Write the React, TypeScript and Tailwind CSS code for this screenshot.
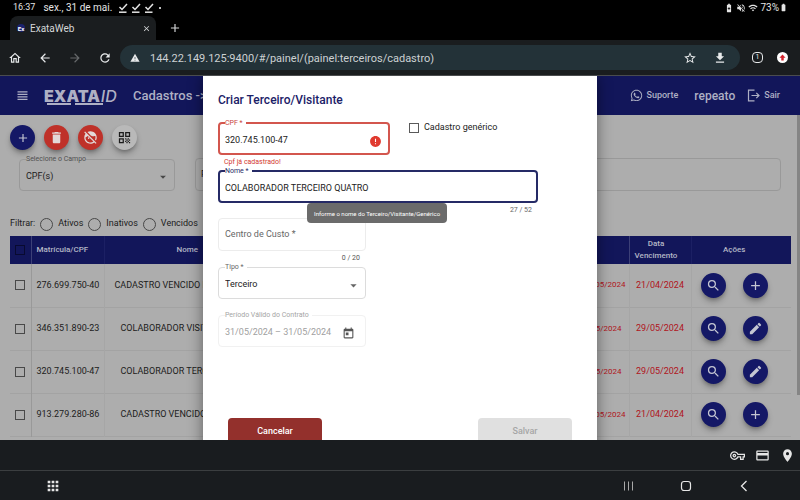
import React from "react";
import {
  MdOutlineHome,
  MdArrowBack,
  MdArrowForward,
  MdRefresh,
  MdWarning,
  MdStarBorder,
  MdDownload,
  MdViewHeadline,
  MdDelete,
  MdFaceRetouchingOff,
  MdQrCode,
  MdSearch,
  MdAdd,
  MdEdit,
  MdOutlineVpnKey,
  MdCreditCard,
  MdLocationOn,
  MdApps,
  MdArrowDropDown,
  MdError,
  MdToday,
  MdClose,
  MdVolumeOff,
  MdWifi,
  MdBatterySaver,
  MdBatteryFull,
} from "react-icons/md";
import { FaWhatsapp } from "react-icons/fa";

function DoneMark() {
  return (
    <svg viewBox="0 0 10 10" className="size-[10px]" fill="none" stroke="currentColor" strokeWidth="1.5">
      <path d="M1.5 4 L4 6.5 L9 1" />
      <path d="M1 9.2 H8.5" />
    </svg>
  );
}

function StatusBar() {
  return (
    <div className="flex h-[15px] shrink-0 items-center bg-black pl-[13px] pr-3 text-[#e4e4e4]">
      <span className="text-[9px]">16:37</span>
      <span className="ml-2 text-[10px]">sex., 31 de mai.</span>
      <span className="ml-[6px] flex items-center gap-[3px]">
        <DoneMark />
        <DoneMark />
        <DoneMark />
        <span className="ml-0.5 size-0.5 rounded-full bg-white" />
      </span>
      <span className="ml-auto flex items-center gap-0.5">
        <MdBatterySaver className="size-[10px]" />
        <MdVolumeOff className="size-[10px]" />
        <MdWifi className="size-[10px]" />
        <span className="text-[10px]">73%</span>
        <MdBatteryFull className="-ml-0.5 size-[9px]" />
      </span>
    </div>
  );
}

function TabStrip() {
  return (
    <div className="flex h-[25px] shrink-0 items-end bg-black pl-[10px]">
      <div className="flex h-6 w-[146px] items-center rounded-t-lg bg-[#1a1d1f] pl-[7px] pr-[5px] text-[#d5d7d8]">
        <span className="flex size-2 items-center justify-center rounded-full bg-[#1b236e] text-[6px] font-bold text-white">
          Ex
        </span>
        <span className="ml-[5px] text-[10px]">ExataWeb</span>
        <button aria-label="Fechar guia" className="ml-auto">
          <MdClose className="size-[9px]" />
        </button>
      </div>
      <button aria-label="Nova guia" className="ml-3 flex h-6 items-center text-[#d5d7d8]">
        <MdAdd className="size-[14px]" />
      </button>
    </div>
  );
}

function AddressBar() {
  return (
    <div className="flex h-9 shrink-0 items-center border-b border-[#4a4c4e] bg-[#1a1d1f] pl-2 pr-3 text-[#e8eaeb]">
      <div className="flex items-center gap-4">
        <button aria-label="Início"><MdOutlineHome className="size-[14px]" /></button>
        <button aria-label="Voltar"><MdArrowBack className="size-[14px]" /></button>
        <button aria-label="Avançar" className="text-[#66696b]"><MdArrowForward className="size-[14px]" /></button>
        <button aria-label="Recarregar"><MdRefresh className="size-[14px]" /></button>
      </div>
      <div className="ml-2 flex h-[25px] flex-1 items-center rounded-full bg-[#233238] pl-[10px] pr-[13px]">
        <MdWarning className="size-[10px] shrink-0" />
        <input
          aria-label="Endereço"
          readOnly
          value="144.22.149.125:9400/#/painel/(painel:terceiros/cadastro)"
          className="ml-[10px] h-5 min-w-0 flex-1 bg-transparent pt-0.5 text-[11px] text-[#ccd1d3] outline-none"
        />
        <button aria-label="Favorito"><MdStarBorder className="size-[14px]" /></button>
        <button aria-label="Baixar" className="ml-4"><MdDownload className="size-[14px]" /></button>
      </div>
      <button
        aria-label="Guias abertas"
        className="ml-3 flex size-[11px] items-center justify-center rounded-sm border border-[#e8eaeb] text-[7px] leading-none"
      >
        1
      </button>
      <button
        aria-label="Atualizar navegador"
        className="ml-[14px] flex size-[11px] items-center justify-center rounded-full bg-white text-[#d3222c]"
      >
        <svg viewBox="0 0 8 8" className="size-[7px]" fill="currentColor">
          <path d="M4 0.5 L7.5 4.2 H5.4 V7.5 H2.6 V4.2 H0.5 Z" />
        </svg>
      </button>
    </div>
  );
}

function Logo() {
  return (
    <span className="relative flex w-20 items-center leading-none text-[#aeb0c4]">
      <span className="font-[Inter,sans-serif] text-[16px] font-black">EXATA</span>
      <span className="ml-px font-[Inter,sans-serif] text-[16px] font-medium italic">ID</span>
      <svg viewBox="0 0 60 2" className="absolute left-0.5 top-[15px] h-0.5 w-[60px]" fill="none" stroke="currentColor" strokeWidth="2">
        <path d="M1 1 H25 M29 1 H57" />
      </svg>
    </span>
  );
}

function ExitIcon() {
  return (
    <svg viewBox="0 0 13 13" className="size-[13px]" fill="none" stroke="currentColor" strokeWidth="1.2">
      <path d="M7.5 1.2 H1.5 V11.8 H7.5 M4.5 6.5 H12 M9.3 3.8 L12 6.5 L9.3 9.2" />
    </svg>
  );
}

function AppHeader() {
  return (
    <header className="flex h-[39px] shrink-0 items-center bg-[#12165a] pl-[15px] pr-5 text-[#aeb0c4]">
      <button aria-label="Menu"><MdViewHeadline className="size-[15px]" /></button>
      <span className="ml-[14px]"><Logo /></span>
      <span className="ml-[9px] whitespace-nowrap text-[13px] font-medium">Cadastros -&gt;</span>
      <a href="#suporte" className="ml-auto flex items-center gap-1 text-[9px] font-medium">
        <FaWhatsapp className="size-[13px]" />
        Suporte
      </a>
      <span className="ml-4 text-[12px] font-medium">repeato</span>
      <a href="#sair" className="ml-3 flex items-center gap-1 text-[9px] font-medium">
        <ExitIcon />
        Sair
      </a>
    </header>
  );
}

function RoundButton({ label, tone, children }: { label: string; tone: string; children: React.ReactNode }) {
  return (
    <button
      aria-label={label}
      className={`flex size-[25px] items-center justify-center rounded-full shadow-md shadow-black/30 ${tone}`}
    >
      {children}
    </button>
  );
}

const NAVY = "bg-[#141866] text-[#c4c6d2]";
const RED = "bg-[#bf3129] text-[#e3d9d8]";

const rows = [
  { id: "276.699.750-40", name: "CADASTRO VENCIDO I", pad: "pl-[10px]", until: "21/05/2024", untilPad: "pr-[3px]", due: "21/04/2024", edit: false },
  { id: "346.351.890-23", name: "COLABORADOR VISITANTE", pad: "pl-4", until: "29/05/2024", untilPad: "pr-[7px]", due: "29/05/2024", edit: true },
  { id: "320.745.100-47", name: "COLABORADOR TERCEIRO", pad: "pl-4", until: "29/05/2024", untilPad: "pr-[7px]", due: "29/05/2024", edit: true },
  { id: "913.279.280-86", name: "CADASTRO VENCIDO", pad: "pl-4", until: "21/05/2024", untilPad: "pr-[3px]", due: "21/04/2024", edit: false },
];

const filters = ["Ativos", "Inativos", "Vencidos"];

function Page() {
  return (
    <main className="flex-1 pl-[10px] pr-[9px] pt-[10px] text-[9px] text-[#1c1c1c]">
      <div className="flex gap-[9px]">
        <RoundButton label="Adicionar" tone={NAVY}><MdAdd className="size-[14px]" /></RoundButton>
        <RoundButton label="Excluir" tone={RED}><MdDelete className="size-[15px]" /></RoundButton>
        <RoundButton label="Remover foto" tone={RED}><MdFaceRetouchingOff className="size-[15px]" /></RoundButton>
        <RoundButton label="Código QR" tone="bg-[#b9b9b9] text-[#1c1c1c]"><MdQrCode className="size-[15px]" /></RoundButton>
      </div>

      <div className="mt-[5px] flex gap-5 pl-[9px]">
        <fieldset className="h-9 w-[156px] min-w-0 shrink-0 rounded-sm border border-[#999999] px-[6px]">
          <legend className="h-2 text-[7px] leading-[8px] text-[#505050]">
            <label htmlFor="campo">Selecione o Campo</label>
          </legend>
          <div className="flex h-7 items-center">
            <select id="campo" className="flex-1 appearance-none bg-transparent outline-none">
              <option>CPF(s)</option>
            </select>
            <MdArrowDropDown className="-mr-0.5 size-[14px] text-[#484848]" />
          </div>
        </fieldset>
        <div className="mr-[10px] mt-[3px] flex h-[33px] flex-1 items-center rounded-sm border border-[#999999] px-[5px]">
          <input
            aria-label="Pesquisar"
            placeholder="Pesquisar"
            className="w-full bg-transparent outline-none placeholder:text-[#1c1c1c]"
          />
        </div>
      </div>

      <div className="mt-[25px] flex h-4 items-center gap-[5px]">
        <span>Filtrar:</span>
        {filters.map((f) => (
          <label key={f} className="flex items-center gap-[5px]">
            <input type="radio" name="filtro" className="size-[13px] appearance-none rounded-full border border-[#484848]" />
            {f}
          </label>
        ))}
      </div>

      <table className="mt-1 w-full table-fixed border-collapse">
        <colgroup>
          <col className="w-[21px]" />
          <col className="w-[73px]" />
          <col className="w-[166px]" />
          <col />
          <col className="w-[100px]" />
          <col className="w-[62px]" />
          <col className="w-[100px]" />
        </colgroup>
        <thead>
          <tr className="h-7 bg-[#12165a] text-[8px] leading-[12px] text-[#b4b6c6]">
            <th className="border-r border-[#3c4077] p-0">
              <input
                type="checkbox"
                aria-label="Selecionar todos"
                className="mx-auto block size-[10px] appearance-none border border-[#080a30]"
              />
            </th>
            <th className="border-r border-[#1c2064] p-0 pl-[5px] text-left font-medium">Matrícula/CPF</th>
            <th className="p-0 font-medium">Nome</th>
            <th className="p-0" />
            <th className="border-r border-[#3c4077] p-0" />
            <th className="border-r border-[#1c2064] p-0 pr-2 font-medium">
              Data
              <br />
              Vencimento
            </th>
            <th className="p-0 pr-[14px] font-medium">Ações</th>
          </tr>
        </thead>
        <tbody>
          {rows.map((r) => (
            <tr key={r.id} className="h-[43px] border-b border-[#a3a3a3]">
              <td className="border-r border-[#999999] p-0">
                <input
                  type="checkbox"
                  aria-label={`Selecionar ${r.id}`}
                  className="mx-auto block size-[10px] appearance-none border border-[#484848]"
                />
              </td>
              <td className="border-r border-[#a6a6a6] p-0 pl-[5px]">{r.id}</td>
              <td className={`overflow-hidden whitespace-nowrap py-0 pr-0 ${r.pad}`}>{r.name}</td>
              <td className="p-0" />
              <td className={`border-r border-[#a6a6a6] py-0 pl-0 text-right text-[8px] text-[#b0141c] ${r.untilPad}`}>{r.until}</td>
              <td className="border-r border-[#a6a6a6] p-0 text-center text-[#b0141c]">{r.due}</td>
              <td className="p-0">
                <div className="flex gap-[17px] pl-[9px]">
                  <RoundButton label={`Consultar ${r.id}`} tone={NAVY}><MdSearch className="size-[15px]" /></RoundButton>
                  <RoundButton label={`Editar ${r.id}`} tone={NAVY}>
                    {r.edit ? <MdEdit className="size-[15px]" /> : <MdAdd className="size-[15px]" />}
                  </RoundButton>
                </div>
              </td>
            </tr>
          ))}
        </tbody>
      </table>
    </main>
  );
}

function Field({
  id,
  label,
  frame,
  labelTone,
  hint,
  children,
}: {
  id: string;
  label: string;
  frame: string;
  labelTone: string;
  hint?: React.ReactNode;
  children: React.ReactNode;
}) {
  return (
    <div>
      <fieldset className={`h-9 min-w-0 rounded ${frame}`}>
        <legend className={`h-2 pr-[3px] text-[7px] leading-[8px] ${labelTone}`}>
          <label htmlFor={id}>{label}</label>
        </legend>
        <div className="flex h-7 items-center">{children}</div>
      </fieldset>
      <div className="h-3 px-[6px] text-[7px] leading-[14px]">{hint}</div>
    </div>
  );
}

function Dialog() {
  return (
    <div className="absolute inset-0 flex justify-center overflow-hidden">
      <section
        role="dialog"
        aria-labelledby="titulo"
        className="h-[420px] w-[394px] bg-white px-[15px] pt-4 text-[9px] text-[#222222] shadow-[0_0_14px_rgba(0,0,0,0.45)]"
      >
        <h1 id="titulo" className="h-[27px] text-[12px] font-medium leading-4 text-[#1b2167]">
          Criar Terceiro/Visitante
        </h1>
        <div className="flex items-start">
          <div className="w-[172px]">
            <Field
              id="cpf"
              label="CPF *"
              frame="border-2 border-[#d3564e] px-[5px]"
              labelTone="text-[#c9443c]"
              hint={<span className="text-[#d3392f]">Cpf já cadastrado!</span>}
            >
              <input id="cpf" defaultValue="320.745.100-47" className="min-w-0 flex-1 bg-transparent outline-none" />
              <MdError className="mr-px size-[13px] text-[#e03a2f]" />
            </Field>
          </div>
          <label className="ml-[19px] mt-0.5 flex items-center gap-[5px]">
            <input type="checkbox" className="size-[10px] appearance-none border border-[#5a5a5a]" />
            Cadastro genérico
          </label>
        </div>
        <div className="relative w-80">
          <Field
            id="nome"
            label="Nome *"
            frame="border-2 border-[#252a66] px-[5px]"
            labelTone="text-[#252a66]"
            hint={<span className="block text-right text-[#666666]">27 / 52</span>}
          >
            <input id="nome" defaultValue="COLABORADOR TERCEIRO QUATRO" className="min-w-0 flex-1 bg-transparent outline-none" />
          </Field>
          <div
            role="tooltip"
            className="absolute left-[89px] top-9 z-10 flex h-5 items-center whitespace-nowrap rounded-sm bg-[#6b6b6b] px-[7px] text-[6px] text-white"
          >
            Informe o nome do Terceiro/Visitante/Genérico
          </div>
        </div>
        <div className="w-[148px]">
          <div className="h-12 pt-[3px]">
            <div className="flex h-[33px] items-center rounded border border-[#ececec] px-[6px]">
              <input
                aria-label="Centro de Custo"
                placeholder="Centro de Custo *"
                className="w-full bg-transparent outline-none placeholder:text-[#666666]"
              />
            </div>
            <div className="px-[6px] text-right text-[7px] leading-[14px] text-[#555555]">0 / 20</div>
          </div>
          <Field id="tipo" label="Tipo *" frame="border border-[#dcdcdc] px-[6px]" labelTone="text-[#666666]">
            <select id="tipo" className="flex-1 appearance-none bg-transparent outline-none">
              <option>Terceiro</option>
            </select>
            <MdArrowDropDown className="-mr-0.5 size-[15px] text-[#666666]" />
          </Field>
          <Field id="periodo" label="Período Válido do Contrato" frame="border border-[#f1f1f1] px-[6px]" labelTone="text-[#a5a5a5]">
            <input
              id="periodo"
              readOnly
              value="31/05/2024 – 31/05/2024"
              className="min-w-0 flex-1 bg-transparent text-[#a0a0a0] outline-none"
            />
            <button aria-label="Abrir calendário" className="mr-1 text-[#555555]">
              <MdToday className="size-[13px]" />
            </button>
          </Field>
        </div>
        <div className="mt-[59px] flex justify-between px-[10px]">
          <button className="h-[27px] w-[94px] rounded-sm bg-[#93302c] font-medium text-white">Cancelar</button>
          <button disabled className="h-[27px] w-[94px] rounded-sm bg-[#e0e0e0] font-medium text-[#a6a6a6]">Salvar</button>
        </div>
      </section>
    </div>
  );
}

function SystemBars() {
  return (
    <footer className="shrink-0 bg-[#191c1f] text-[#e6e6e6]">
      <div className="flex h-[30px] items-center justify-end gap-[10px] pr-[5px]">
        <button aria-label="Senhas"><MdOutlineVpnKey className="size-[15px]" /></button>
        <button aria-label="Cartões"><MdCreditCard className="size-[15px]" /></button>
        <button aria-label="Endereços"><MdLocationOn className="size-[15px]" /></button>
      </div>
      <div className="flex h-[30px] items-center border-t border-[#3b3e40] pl-[45px] pr-[50px]">
        <button aria-label="Aplicativos"><MdApps className="size-4" /></button>
        <div className="ml-auto flex items-center gap-[46px]">
          <button aria-label="Recentes" className="text-[#a8a8a8]">
            <svg viewBox="0 0 12 12" className="size-3" stroke="currentColor" strokeWidth="1">
              <path d="M2.5 1.5 V10.5 M6.5 1.5 V10.5 M10.5 1.5 V10.5" />
            </svg>
          </button>
          <button aria-label="Tela inicial">
            <svg viewBox="0 0 12 12" className="size-3" fill="none" stroke="currentColor" strokeWidth="1.2">
              <rect x="1.5" y="1.5" width="9" height="9" rx="2.5" />
            </svg>
          </button>
          <button aria-label="Retornar">
            <svg viewBox="0 0 12 12" className="size-3" fill="none" stroke="currentColor" strokeWidth="1.3">
              <path d="M8.5 1 L3.5 6 L8.5 11" />
            </svg>
          </button>
        </div>
      </div>
    </footer>
  );
}

export default function App() {
  return (
    <div className="flex h-screen flex-col overflow-hidden font-[Roboto,sans-serif]">
      <StatusBar />
      <TabStrip />
      <AddressBar />
      <div className="relative flex min-h-0 flex-1 flex-col overflow-hidden bg-[#adadad]">
        <AppHeader />
        <div className="flex">
          <Page />
          <div className="-ml-[3px] h-[280px] w-[3px] bg-[#858585]" />
        </div>
        <Dialog />
      </div>
      <SystemBars />
    </div>
  );
}
